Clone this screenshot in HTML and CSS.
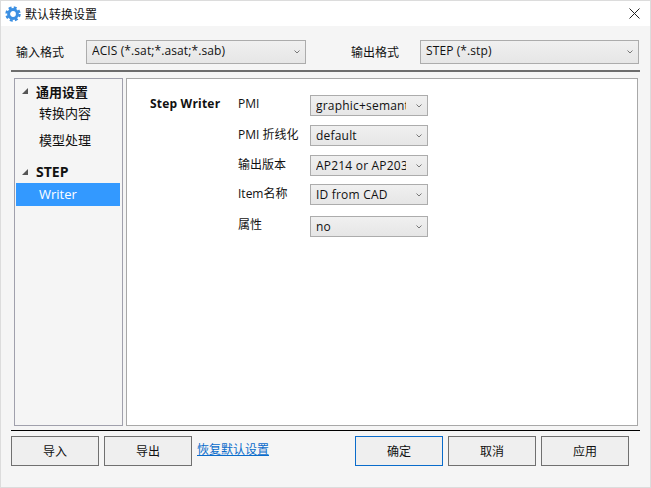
FILE: index.html
```html
<!DOCTYPE html>
<html lang="zh">
<head>
<meta charset="utf-8">
<title>默认转换设置</title>
<link rel="stylesheet" href="styles.css">
</head>
<body>
<div class="window">
  <header class="titlebar">
    <svg class="gear" width="16" height="16" viewBox="0 0 16 16"><circle cx="8" cy="8" r="4.4" fill="none" stroke="#3b8fe2" stroke-width="3"/><circle cx="8" cy="8" r="6.5" fill="none" stroke="#3b8fe2" stroke-width="2.4" stroke-dasharray="2.9 2.2"/></svg>
    <span class="title">默认转换设置</span>
    <svg class="close" width="11" height="11" viewBox="0 0 11 11"><path d="M0.5 0.5L10.5 10.5M10.5 0.5L0.5 10.5" stroke="#222" stroke-width="1" fill="none"/></svg>
  </header>
  <main class="content">
    <section class="formats">
      <label class="fmt-label">输入格式</label>
      <div class="combo combo-wide"><span class="combo-text">ACIS (*.sat;*.asat;*.sab)</span><svg class="chev" width="6" height="4" viewBox="0 0 6 4"><path d="M0.5 0.5L3 3L5.5 0.5" fill="none" stroke="#777"/></svg></div>
      <label class="fmt-label fmt-out">输出格式</label>
      <div class="combo combo-wide"><span class="combo-text">STEP (*.stp)</span><svg class="chev" width="6" height="4" viewBox="0 0 6 4"><path d="M0.5 0.5L3 3L5.5 0.5" fill="none" stroke="#777"/></svg></div>
    </section>
    <hr class="rule rule-top">
    <section class="panels">
      <nav class="tree">
        <div class="node node-first"><i class="arrow"></i>通用设置</div>
        <div class="leaf leaf-a">转换内容</div>
        <div class="leaf leaf-b">模型处理</div>
        <div class="node node-step"><i class="arrow"></i>STEP</div>
        <div class="leaf leaf-sel">Writer</div>
      </nav>
      <div class="pane">
        <h2 class="pane-title">Step Writer</h2>
        <div class="fields">
          <div class="field"><span class="field-label">PMI</span><div class="combo combo-small"><span class="combo-text">graphic+semantic</span><svg class="chev" width="6" height="4" viewBox="0 0 6 4"><path d="M0.5 0.5L3 3L5.5 0.5" fill="none" stroke="#777"/></svg></div></div>
          <div class="field"><span class="field-label">PMI 折线化</span><div class="combo combo-small"><span class="combo-text">default</span><svg class="chev" width="6" height="4" viewBox="0 0 6 4"><path d="M0.5 0.5L3 3L5.5 0.5" fill="none" stroke="#777"/></svg></div></div>
          <div class="field field-short"><span class="field-label">输出版本</span><div class="combo combo-small"><span class="combo-text">AP214 or AP203</span><svg class="chev" width="6" height="4" viewBox="0 0 6 4"><path d="M0.5 0.5L3 3L5.5 0.5" fill="none" stroke="#777"/></svg></div></div>
          <div class="field field-tight"><span class="field-label">Item名称</span><div class="combo combo-small"><span class="combo-text">ID from CAD</span><svg class="chev" width="6" height="4" viewBox="0 0 6 4"><path d="M0.5 0.5L3 3L5.5 0.5" fill="none" stroke="#777"/></svg></div></div>
          <div class="field field-last"><span class="field-label">属性</span><div class="combo combo-small"><span class="combo-text">no</span><svg class="chev" width="6" height="4" viewBox="0 0 6 4"><path d="M0.5 0.5L3 3L5.5 0.5" fill="none" stroke="#777"/></svg></div></div>
        </div>
      </div>
    </section>
    <hr class="rule rule-bottom">
    <footer class="actions">
      <button class="btn">导入</button>
      <button class="btn">导出</button>
      <a class="reset" href="#">恢复默认设置</a>
      <button class="btn btn-default">确定</button>
      <button class="btn">取消</button>
      <button class="btn">应用</button>
    </footer>
  </main>
</div>
</body>
</html>
```
FILE: styles.css
```css
* { box-sizing: border-box; }
html, body { margin: 0; padding: 0; }
body {
  width: 651px;
  height: 488px;
  font-family: "Open Sans", "Noto Sans CJK SC", sans-serif;
  font-size: 12px;
  color: #111;
  overflow: hidden;
}
.window {
  width: 651px;
  height: 488px;
  border: 1px solid #dcdcdc;
  background: #f5f5f5;
  display: flex;
  flex-direction: column;
}
.titlebar {
  height: 25px;
  background: #fff;
  display: flex;
  align-items: center;
  padding: 0 10px 0 4px;
  flex: none;
}
.gear { flex: none; }
.title { margin-left: 4px; font-size: 12px; }
.close { margin-left: auto; }
.content { flex: 1; padding: 14px 10px 0; display: flex; flex-direction: column; }
.formats { display: flex; align-items: center; height: 24px; padding-left: 5px; }
.fmt-label { width: 70px; flex: none; }
.fmt-out { margin-left: 45px; width: 69px; }
.combo {
  display: flex;
  align-items: center;
  border: 1px solid #acacac;
  background: linear-gradient(#f0f0f0, #e6e6e6);
  flex: none;
}
.combo-wide { width: 220px; height: 24px; padding: 0 5px 3px 5px; }
.combo-wide:last-child { width: 219px; }
.combo-small { width: 118px; height: 21px; padding: 0 5px 0 5px; font-size: 12px; }
.combo-text { flex: 1; min-width: 0; overflow: hidden; white-space: nowrap; letter-spacing: 0.1px; }
.combo-small .combo-text { letter-spacing: 0.2px; }
.chev { flex: none; margin-left: 10px; }
.combo-wide .chev { margin-top: 3px; }
.rule { margin: 0; border: 0; width: 629px; flex: none; }
.rule-top { height: 2px; margin-top: 6px; background: #6d6d6d; }
.rule-bottom { height: 1px; margin-top: 4px; background: #000; }
.panels { display: flex; gap: 3px; margin: 6px 0 0 3px; height: 348px; flex: none; }
.tree { width: 109px; border: 1px solid #a0a0ac; background: #f5f5f5; padding: 1px; }
.node { font-weight: 700; font-size: 13px; height: 24px; display: flex; align-items: center; padding-left: 6px; }
.node-first { padding-bottom: 2px; }
.node-step { margin-top: 5px; height: 23px; font-size: 14px; }
.arrow {
  width: 0; height: 0; margin-right: 8px; flex: none;
  border-left: 6px solid transparent;
  border-bottom: 6px solid #555;
}
.leaf { font-size: 13px; padding-left: 23px; }
.leaf-a { height: 25px; line-height: 18px; }
.leaf-b { height: 26px; line-height: 22px; }
.leaf-sel { height: 23px; line-height: 22px; background: #3399ff; color: #fff; margin-right: 1px; }
.pane {
  width: 512px;
  border: 1px solid #a8a8a8;
  background: #fff;
  display: flex;
  align-items: flex-start;
  padding: 16px 0 0 23px;
}
.pane-title { margin: 0; font-size: 12px; font-weight: 700; width: 88px; flex: none; letter-spacing: 0.2px; }
.fields { display: flex; flex-direction: column; }
.field { display: flex; align-items: flex-start; height: 30px; }
.field-short { height: 29px; }
.field-tight { height: 32px; }
.field-label { width: 72px; flex: none; }
.field-last .field-label { margin-top: -1px; }
.actions { display: flex; align-items: flex-start; gap: 5px; margin-top: 5px; }
.btn {
  width: 88px;
  height: 30px;
  border: 1px solid #707070;
  background: #efefef;
  font: inherit;
  color: #111;
  padding: 0;
  flex: none;
}
.btn-default { border-color: #0a6ccb; margin-left: 81px; }
.reset { color: #0a6ccb; text-decoration: underline; line-height: 28px; font-size: 12px; }
```
